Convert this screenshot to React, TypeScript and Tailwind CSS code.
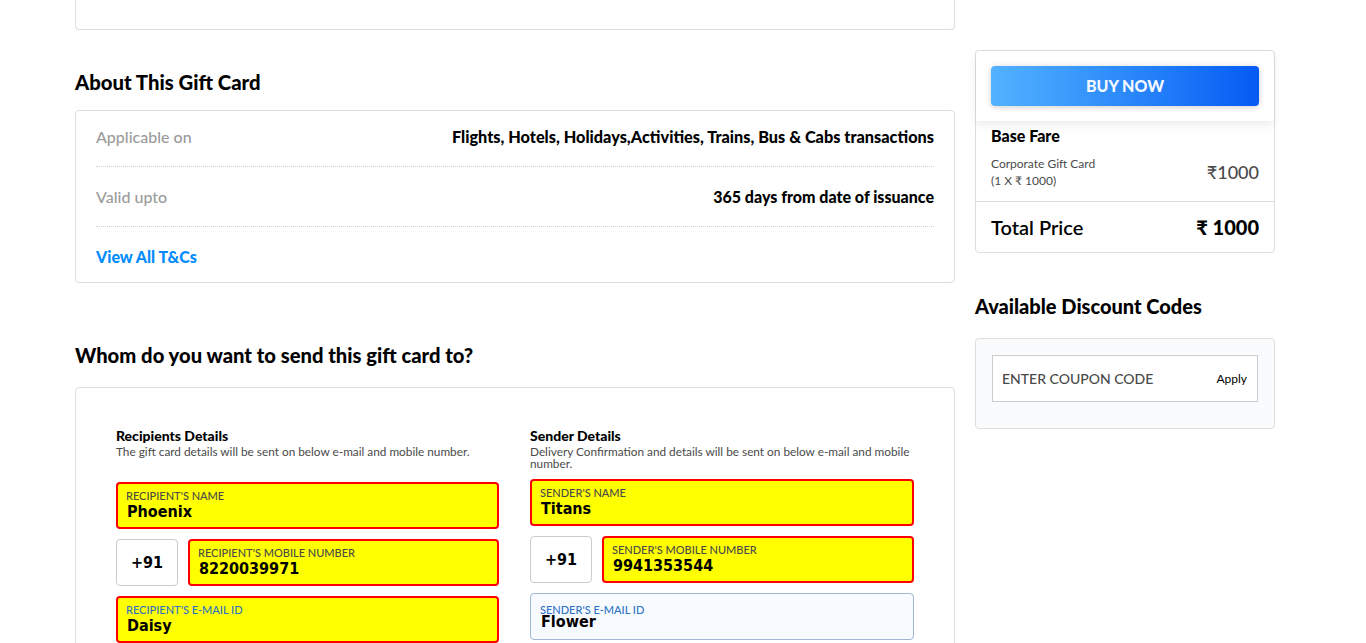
import React from 'react';

const lato = { fontFamily: 'Lato, "Open Sans", sans-serif' };
const valueFont = { fontFamily: '"DejaVu Sans Condensed", "DejaVu Sans", sans-serif', fontStretch: 'condensed' };

const Field = ({
  label,
  value,
  blue,
  plain,
  grow,
}: {
  label: string;
  value: string;
  blue?: boolean;
  plain?: boolean;
  grow?: boolean;
}) => (
  <div
    className={`h-[47px] rounded-sm ${grow ? 'flex-1' : 'w-full'} ${
      plain
        ? 'border border-[#9db7d3] bg-[#f7fbff] px-[9px] pt-[9px]'
        : 'border-2 border-[#ff0000] bg-[#ffff00] px-[8px] pt-[5px]'
    }`}
  >
    <div className={`text-[11px] leading-[13px] font-medium uppercase ${blue ? 'text-[#2f72c4]' : 'text-[#4a4a4a]'}`}>
      {label}
    </div>
    <div
      className={`text-[16px] leading-[18px] font-bold text-black pl-px ${plain ? '-mt-[3px]' : 'mt-px'}`}
      style={valueFont}
    >
      {value}
    </div>
  </div>
);

const Code = () => (
  <div
    className="h-[47px] w-[62px] shrink-0 rounded-sm border border-[#cccccc] bg-white flex items-center justify-center text-[16px] font-bold text-black"
    style={valueFont}
  >
    +91
  </div>
);

export default function App() {
  return (
    <div className="min-h-screen w-full bg-white text-black overflow-hidden" style={lato}>
      <div className="flex gap-5 pl-[75px]">
        {/* main column */}
        <div className="w-[880px] shrink-0">
          <div className="h-[30px] rounded-b border-x border-b border-[#dedede]" />

          <h2 className="mt-[41px] text-[20.3px] leading-[22px] font-black">About This Gift Card</h2>

          <div className="mt-[17px] rounded border border-[#dedede] px-5 pt-4 pb-[15px] text-[16px] leading-5">
            <div className="flex justify-between pb-[19px] border-b border-dotted border-[#cfcfcf]">
              <span className="font-medium text-[#9b9b9b]">Applicable on</span>
              <span className="font-black text-[16.3px]">
                Flights, Hotels, Holidays,Activities, Trains, Bus &amp; Cabs transactions
              </span>
            </div>
            <div className="flex justify-between pt-5 pb-[19px] border-b border-dotted border-[#cfcfcf]">
              <span className="font-medium text-[#9b9b9b]">Valid upto</span>
              <span className="font-black">365 days from date of issuance</span>
            </div>
            <div className="pt-5">
              <span className="font-black text-[#008cff]">View All T&amp;Cs</span>
            </div>
          </div>

          <h2 className="mt-[61px] text-[20.2px] leading-[22px] font-black">Whom do you want to send this gift card to?</h2>

          <div className="mt-[21px] h-[300px] rounded border border-[#dedede] px-10 pt-[39px]">
            <div className="flex gap-[31px]">
              <div className="w-[383px]">
                <div className="text-[14px] leading-[17px] font-black">Recipients Details</div>
                <div className="mt-[2px] text-[11.8px] leading-[12px] text-[#4a4a4a]">
                  The gift card details will be sent on below e-mail and mobile number.
                </div>
                <div className="mt-[24px] flex flex-col gap-[10px]">
                  <Field label="Recipient's Name" value="Phoenix" />
                  <div className="flex gap-[10px]">
                    <Code />
                    <Field label="Recipient's Mobile Number" value="8220039971" grow />
                  </div>
                  <Field label="Recipient's E-mail ID" value="Daisy" blue />
                </div>
              </div>
              <div className="w-[384px]">
                <div className="text-[14px] leading-[17px] font-black">Sender Details</div>
                <div className="mt-[2px] text-[11.8px] leading-[12px] text-[#4a4a4a]">
                  Delivery Confirmation and details will be sent on below e-mail and mobile number.
                </div>
                <div className="mt-[9px] flex flex-col gap-[10px]">
                  <Field label="Sender's Name" value="Titans" />
                  <div className="flex gap-[10px]">
                    <Code />
                    <Field label="Sender's Mobile Number" value="9941353544" grow />
                  </div>
                  <Field label="Sender's E-mail ID" value="Flower" blue plain />
                </div>
              </div>
            </div>
          </div>
        </div>

        {/* sidebar */}
        <div className="w-[300px] shrink-0 pt-[50px]">
          <div className="rounded border border-[#dedede] bg-white">
            <div className="p-[15px] shadow-[0_4px_10px_rgba(0,0,0,0.08)] rounded-t">
              <button className="h-10 w-full rounded bg-gradient-to-r from-[#53b2fe] to-[#065af3] text-[16px] font-black text-[#f4f8ff] shadow-[0_1px_6px_rgba(0,0,0,0.2)]">
                BUY NOW
              </button>
            </div>
            <div className="px-[15px] pt-[5px]">
              <div className="text-[16px] leading-5 font-black">Base Fare</div>
              <div className="mt-[9px] flex items-center justify-between pb-[12px]">
                <div className="text-[12px] leading-[17px] text-[#4a4a4a]">
                  <div>Corporate Gift Card</div>
                  <div>(1 X ₹ 1000)</div>
                </div>
                <div className="text-[18px] font-medium text-[#4a4a4a]">₹1000</div>
              </div>
            </div>
            <div className="flex items-center justify-between border-t border-[#dedede] px-[15px] h-[51px] text-[20px]">
              <span className="font-semibold">Total Price</span>
              <span className="font-black">₹ 1000</span>
            </div>
          </div>

          <h3 className="mt-[41px] text-[20px] leading-6 font-black">Available Discount Codes</h3>

          <div className="mt-[20px] rounded border border-[#dedede] bg-[#fafbfc] px-4 pt-4 pb-[26px]">
            <div className="flex h-[47px] items-center justify-between border border-[#cccccc] bg-white pl-[9px] pr-[10px]">
              <span className="text-[14px] font-medium text-[#4a4a4a]">ENTER COUPON CODE</span>
              <span className="text-[12px] text-black">Apply</span>
            </div>
          </div>
        </div>
      </div>
    </div>
  );
}
